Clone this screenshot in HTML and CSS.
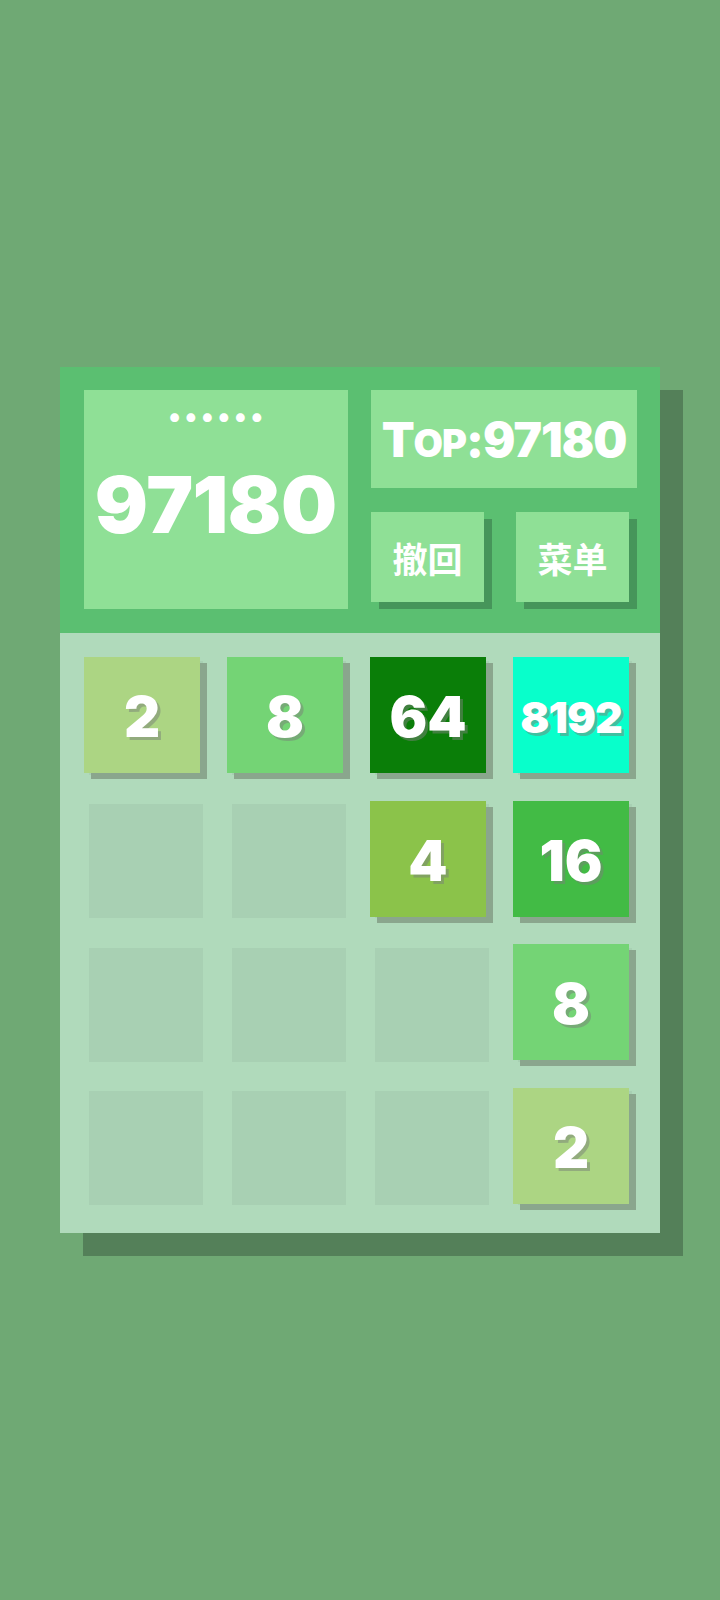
FILE: index.html
```html
<!DOCTYPE html>
<html lang="zh">
<head>
<meta charset="utf-8">
<title>2048</title>
<link rel="stylesheet" href="styles.css">
</head>
<body>
<div class="game">
  <div class="header">
    <div class="score-box">
      <div class="name">••••••</div>
      <div class="score">97180</div>
    </div>
    <div class="side">
      <div class="top-box">T<span class="sc">op</span>:97180</div>
      <div class="buttons">
        <div class="btn">撤回</div>
        <div class="btn">菜单</div>
      </div>
    </div>
  </div>
  <div class="board">
    <div class="cell"><div class="tile t2">2</div></div>
    <div class="cell"><div class="tile t8">8</div></div>
    <div class="cell"><div class="tile t64">64</div></div>
    <div class="cell"><div class="tile t8192">8192</div></div>
    <div class="cell"></div>
    <div class="cell"></div>
    <div class="cell"><div class="tile t4">4</div></div>
    <div class="cell"><div class="tile t16">16</div></div>
    <div class="cell"></div>
    <div class="cell"></div>
    <div class="cell"></div>
    <div class="cell"><div class="tile t8">8</div></div>
    <div class="cell"></div>
    <div class="cell"></div>
    <div class="cell"></div>
    <div class="cell"><div class="tile t2">2</div></div>
  </div>
</div>
</body>
</html>
```
FILE: styles.css
```css
html, body {
  margin: 0;
  padding: 0;
}
body {
  background: #6fa974;
  min-height: 1600px;
  padding-top: 367px;
  box-sizing: border-box;
  font-family: Inter, "Noto Sans", "Noto Sans CJK SC", sans-serif;
  color: #fff;
}
.game {
  width: 600px;
  margin: 0 0 0 60px;
  box-shadow: 23px 23px 0 #548059;
}
.header {
  background: #5bbf71;
  height: 266px;
  box-sizing: border-box;
  padding: 23px 23px 24px 23.5px;
  display: flex;
  gap: 23px;
}
.score-box {
  width: 264.5px;
  height: 219px;
  background: #8fe096;
  display: flex;
  flex-direction: column;
  align-items: center;
}
.name {
  margin-top: 10px;
  padding-left: 5px;
  font-size: 28px;
  letter-spacing: 5.3px;
  line-height: 32px;
  font-weight: 900;
}
.score {
  margin-top: 32px;
  font-size: 79px;
  font-weight: 900;
  line-height: 80px;
  letter-spacing: -0.5px;
}
.side {
  width: 266px;
  display: flex;
  flex-direction: column;
  gap: 24px;
}
.top-box {
  height: 98px;
  background: #8fe096;
  font-size: 48px;
  font-weight: 900;
  display: flex;
  align-items: center;
  justify-content: center;
  letter-spacing: -1px;
}
.sc {
  text-transform: uppercase;
  font-size: 38px;
  line-height: 1;
  align-self: center;
  margin-top: 8px;
}
.buttons {
  display: flex;
  gap: 32px;
}
.btn {
  width: 113px;
  height: 90px;
  background: #8fe096;
  box-shadow: 8px 7px 0 #46955a;
  display: flex;
  align-items: center;
  justify-content: center;
  font-family: "Noto Sans CJK SC", sans-serif;
  font-weight: 700;
  font-size: 35px;
}
.board {
  background: #b0dabb;
  height: 600px;
  box-sizing: border-box;
  padding: 27.5px 28.5px;
  display: grid;
  grid-template-columns: repeat(4, 114px);
  grid-template-rows: repeat(4, 114px);
  gap: 29.5px 29px;
}
.cell {
  background: #a8d0b3;
}
.tile {
  width: 116px;
  height: 116px;
  margin: -3.5px 0 0 -4.5px;
  box-shadow: 7px 6px 0 #8aa68d;
  display: flex;
  align-items: center;
  justify-content: center;
  font-weight: 900;
  font-size: 56px;
  padding-top: 4px;
  box-sizing: border-box;
  text-shadow: 3px 3px 0 rgba(120, 130, 120, 0.5);
}
.t2 { background: #acd583; }
.t4 { background: #8bc34a; }
.t8 { background: #74d475; }
.t16 { background: #42bb45; }
.t64 { background: #0a7e08; }
.t8192 { background: #08ffcb; font-size: 43px; letter-spacing: -1px; }
```
